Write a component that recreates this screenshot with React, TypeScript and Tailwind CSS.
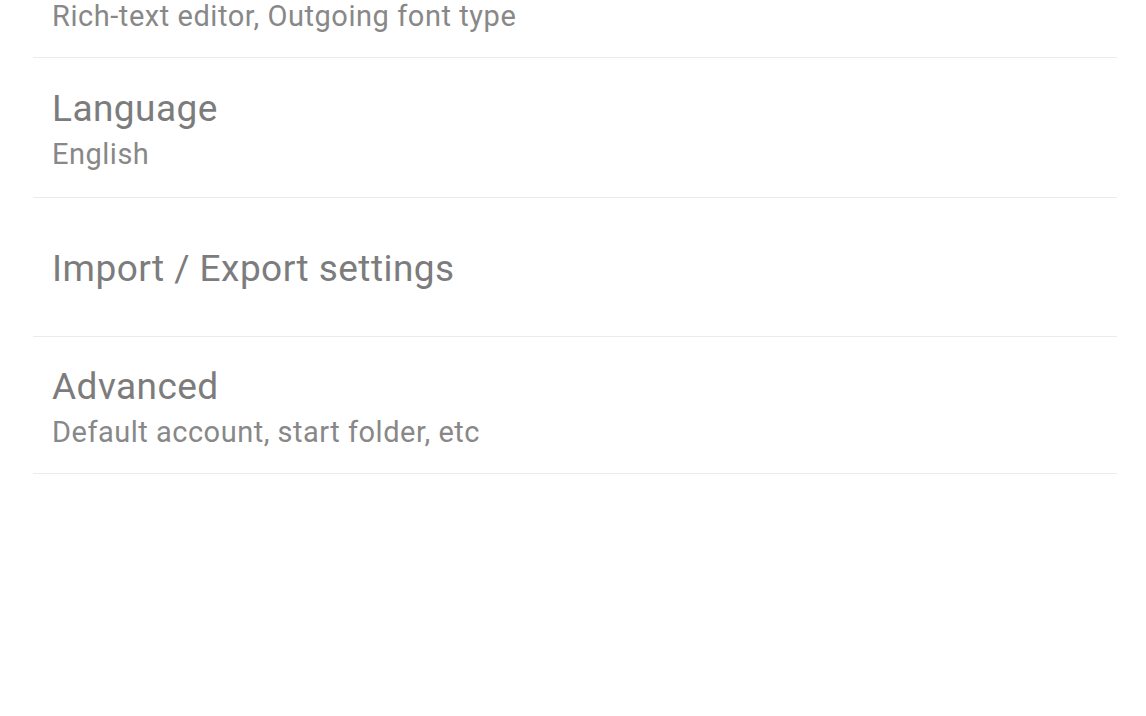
const rows = [
  { title: 'Language', subtitle: 'English', height: 'h-[140px]' },
  { title: 'Import / Export settings', height: 'h-[139px]' },
  { title: 'Advanced', subtitle: 'Default account, start folder, etc', height: 'h-[137px]' },
];

const SettingRow = ({ title, subtitle, height }: { title: string; subtitle?: string; height: string }) => (
  <div className={`flex ${height} flex-col justify-center gap-[5px] border-b border-[#ebebeb] pt-[4px] pl-[19px]`}>
    <div className="text-[37px] leading-[44px] tracking-[0.45px] text-[#7c7c7c]">{title}</div>
    {subtitle && <div className="text-[29px] leading-[36px] tracking-[0.5px] text-[#888888]">{subtitle}</div>}
  </div>
);

export default function App() {
  return (
    <div className="h-[716px] w-[1146px] overflow-hidden bg-white font-['Roboto',sans-serif]">
      <div className="mx-[33px] w-[1084px]">
        <div className="flex h-[58px] items-start border-b border-[#ebebeb] pl-[19px]">
          <div className="-mt-[2px] text-[29px] leading-[36px] tracking-[0.55px] text-[#888888]">
            Rich-text editor, Outgoing font type
          </div>
        </div>
        {rows.map((row) => (
          <SettingRow key={row.title} {...row} />
        ))}
      </div>
    </div>
  );
}
